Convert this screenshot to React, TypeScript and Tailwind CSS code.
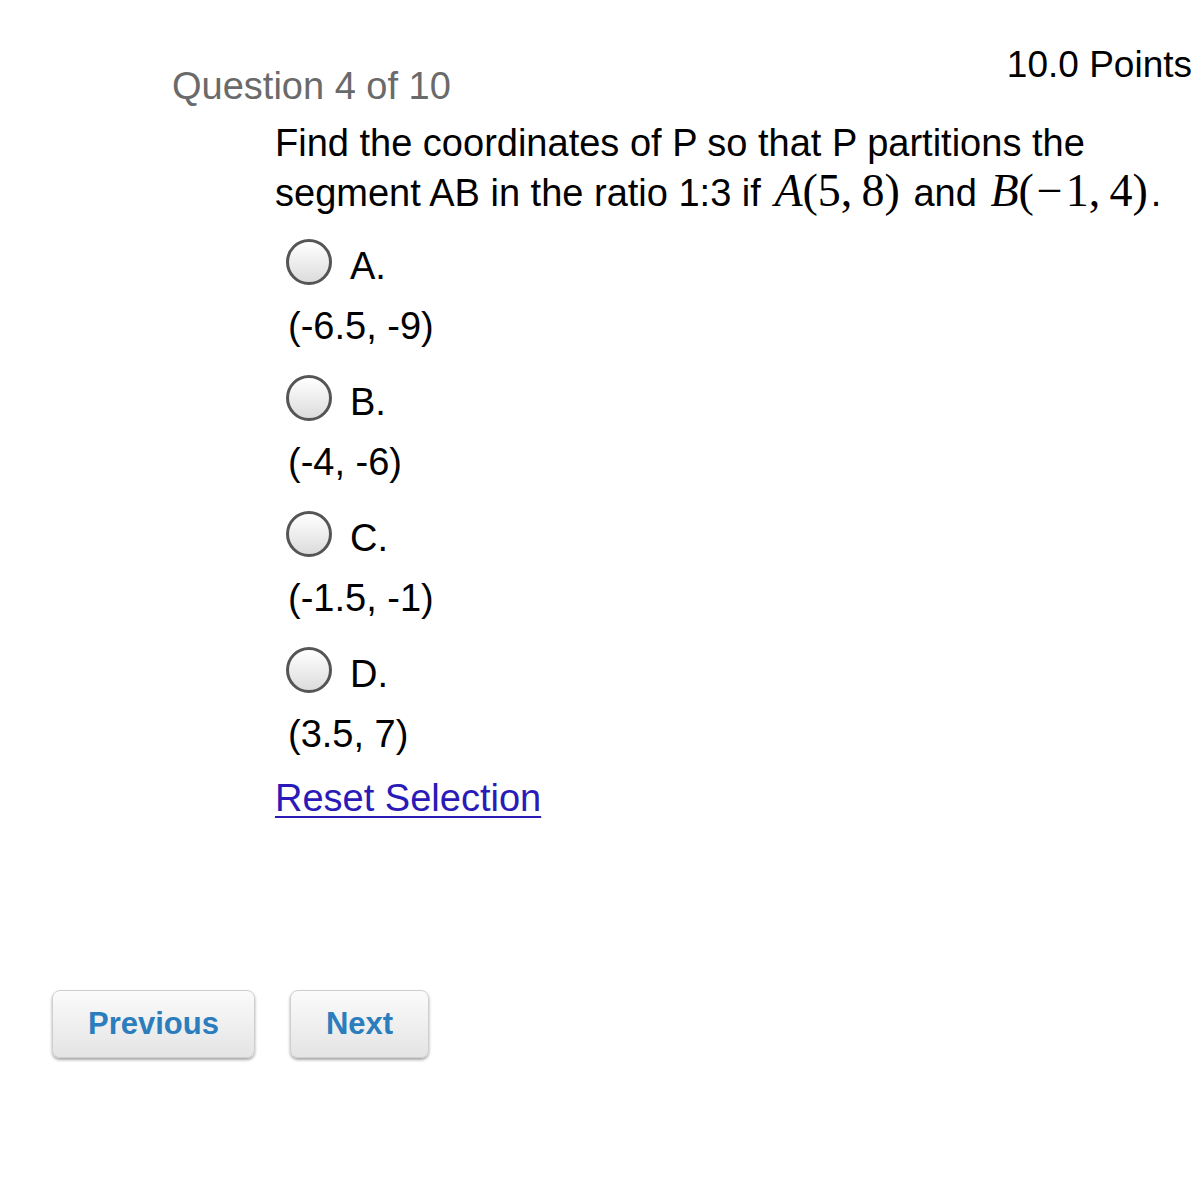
import React from 'react';

const options = [
  { key: 'A', value: '(-6.5, -9)' },
  { key: 'B', value: '(-4, -6)' },
  { key: 'C', value: '(-1.5, -1)' },
  { key: 'D', value: '(3.5, 7)' },
];

const Radio: React.FC = () => (
  <span className="block w-[46px] h-[46px] rounded-full border-[3px] border-[#555555] bg-gradient-to-b from-white to-[#dcdcdc] shrink-0" />
);

const Math: React.FC<{ children: React.ReactNode }> = ({ children }) => (
  <span className="mx-[3px] font-['Liberation_Serif','DejaVu_Serif',serif] text-[46px]">{children}</span>
);

export default function App() {
  return (
    <div className="w-[1198px] h-[1200px] bg-white text-black font-['Liberation_Sans','Helvetica',sans-serif] text-[38px] leading-[44px]">
      {/* Header */}
      <div className="flex justify-between items-start pt-[43px]">
        <div className="pl-[172px] pt-[21px] text-[#6a6a6a]">Question 4 of 10</div>
        <div className="pr-[6px] text-[37px]">10.0 Points</div>
      </div>

      {/* Question body */}
      <div className="pl-[275px]">
        <p className="leading-[48px] mt-[11px]">
          Find the coordinates of P so that P partitions the
          <br />
          segment AB in the ratio 1:3 if{' '}
          <Math>
            <i>A</i>(5,&thinsp;8)
          </Math>{' '}
          and{' '}
          <Math>
            <i>B</i>(<span className="mx-[3px]">−</span>1,&thinsp;4)
          </Math>
          .
        </p>

        <div className="mt-[19px] flex flex-col">
          {options.map((o) => (
            <div key={o.key} className="mb-[24px]">
              <label className="flex items-center gap-[18px] pl-[11px]">
                <Radio />
                <span className="pt-[8px]">{o.key}.</span>
              </label>
              <div className="mt-[16px] pl-[13px]">{o.value}</div>
            </div>
          ))}
        </div>

        <a href="#" className="-mt-[4px] block w-fit text-[#2a1bb8] underline underline-offset-[5px] decoration-2">
          Reset Selection
        </a>
      </div>

      {/* Navigation */}
      <div className="flex gap-[35px] pl-[52px] mt-[170px]">
        <button className="w-[203px] h-[68px] rounded-[8px] border border-[#cfcfcf] bg-gradient-to-b from-[#fbfbfb] to-[#e4e4e4] shadow-[0_2px_3px_rgba(0,0,0,0.35)] text-[#2b7dbd] font-bold text-[31px]">
          Previous
        </button>
        <button className="w-[139px] h-[68px] rounded-[8px] border border-[#cfcfcf] bg-gradient-to-b from-[#fbfbfb] to-[#e4e4e4] shadow-[0_2px_3px_rgba(0,0,0,0.35)] text-[#2b7dbd] font-bold text-[31px]">
          Next
        </button>
      </div>
    </div>
  );
}
